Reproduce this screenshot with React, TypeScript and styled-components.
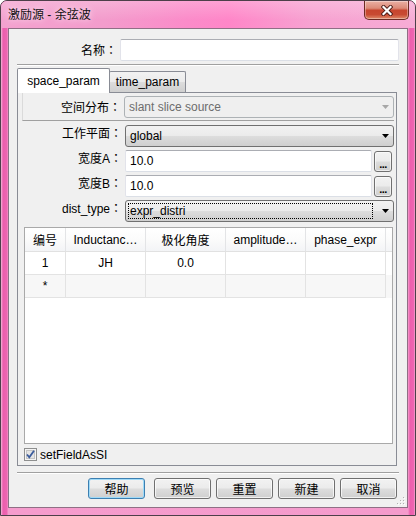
import React from "react";
import styled, { createGlobalStyle } from "styled-components";

const FONT = `"Liberation Sans", "Noto Sans CJK SC", sans-serif`;

const GlobalStyle = createGlobalStyle`
  html, body { margin: 0; padding: 0; background: #ffffff; }
  body { font-family: ${FONT}; font-size: 12px; color: #000; }
  *, *::before, *::after { box-sizing: border-box; }
`;

const Window = styled.div`
  width: 416px;
  height: 516px;
  display: flex;
  flex-direction: column;
  border: 1px solid #4d3f49;
  border-radius: 7px 7px 0 0;
  overflow: hidden;
  background: #ee72b8;
`;

const TitleBar = styled.div`
  flex: 0 0 27px;
  display: flex;
  align-items: flex-start;
  justify-content: space-between;
  padding: 0 6px 0 7px;
  background:
    linear-gradient(to bottom, rgba(255, 255, 255, 0.22), rgba(255, 255, 255, 0) 70%),
    linear-gradient(to right, #f3a2cf 0%, #f39ccc 25%, #fb8bc9 45%, #ff86c8 55%, #f7a2d1 75%, #f6acd5 100%);
`;

const Title = styled.div`
  margin-top: 6px;
  line-height: 16px;
  font-size: 12px;
  color: #111;
  text-shadow: 0 0 6px rgba(255, 255, 255, 0.9);
`;

const CloseButton = styled.div`
  width: 45px;
  height: 19px;
  border: 1px solid #6b2a24;
  border-top: none;
  border-radius: 0 0 5px 5px;
  background: linear-gradient(to bottom, #ebb0a4 0%, #dc8a78 40%, #c7452e 52%, #c84a32 75%, #e08a6a 100%);
  box-shadow: inset 0 0 0 1px rgba(255, 255, 255, 0.35);
  display: flex;
  align-items: center;
  justify-content: center;
`;

const Frame = styled.div`
  flex: 1;
  display: flex;
  padding: 0 7px 7px 7px;
  background: linear-gradient(to right, #f6b6da 0px, #ec5ead 2px, #ee66b2 6px, #f59ccd 7px, #f49bcc calc(100% - 7px), #ec5ead calc(100% - 5px), #ee66b2 calc(100% - 1px), #f6b6da 100%);
`;

const Client = styled.div`
  flex: 1;
  position: relative;
  display: flex;
  flex-direction: column;
  background: #f0f0f0;
  border: 1px solid #8f6f85;
`;

const NameRow = styled.div`
  display: flex;
  align-items: center;
  padding: 10px 8px 0 8px;
`;

const Label = styled.div<{ $w: number }>`
  flex: 0 0 ${(p) => p.$w}px;
  margin-right: 3px;
  text-align: right;
  white-space: nowrap;
  line-height: 16px;
`;

const Colon = styled.span`
  font-family: "Noto Sans CJK JP", "Noto Sans CJK TC", sans-serif;
`;

const TextInput = styled.div`
  flex: 1;
  height: 22px;
  display: flex;
  align-items: center;
  padding-left: 4px;
  background: #fff;
  border: 1px solid #dbdfe6;
  border-top-color: #abadb3;
  border-left-color: #e2e3ea;
  border-right-color: #e2e3ea;
  border-radius: 2px;
`;

const Separator = styled.div`
  margin: 3px 8px 0 8px;
  border-top: 1px solid #a0a0a0;
  border-bottom: 1px solid #ffffff;
`;

const TabWidget = styled.div`
  margin: 2px 10px 0 8px;
  display: flex;
  flex-direction: column;
`;

const TabBar = styled.div`
  display: flex;
  align-items: flex-end;
  height: 24px;
  position: relative;
  z-index: 1;
`;

const Tab = styled.div<{ $active?: boolean }>`
  position: relative;
  z-index: ${(p) => (p.$active ? 2 : 1)};
  display: flex;
  align-items: center;
  justify-content: center;
  width: ${(p) => (p.$active ? 93 : 77)}px;
  height: ${(p) => (p.$active ? 25 : 21)}px;
  margin-left: ${(p) => (p.$active ? 0 : -1)}px;
  margin-bottom: ${(p) => (p.$active ? -1 : 0)}px;
  border: 1px solid #898c95;
  border-bottom: none;
  border-radius: 2px 2px 0 0;
  background: ${(p) =>
    p.$active ? "#ffffff" : "linear-gradient(to bottom, #f2f2f2 0%, #ebebeb 50%, #dddddd 51%, #cfcfcf 100%)"};
  padding-bottom: ${(p) => (p.$active ? 1 : 0)}px;
`;

const Pane = styled.div`
  height: 374px;
  display: flex;
  flex-direction: column;
  border: 1px solid #898c95;
  background: #f0f0f0;
  padding-right: 2px;
`;

const SpaceFrame = styled.div`
  margin-left: 4px;
  display: flex;
  align-items: center;
  padding: 3px 0 2px 0;
  border-left: 1px solid #dadada;
  border-bottom: 1px solid #a0a0a0;
`;

const FieldRow = styled.div<{ $top: number }>`
  display: flex;
  align-items: flex-start;
  margin-top: ${(p) => p.$top}px;
  height: 22px;
`;

const Combo = styled.div<{ $disabled?: boolean }>`
  flex: 1;
  height: 22px;
  display: flex;
  align-items: stretch;
  padding: 2px 0 2px 2px;
  border: 1px solid ${(p) => (p.$disabled ? "#adb2b5" : "#707070")};
  border-radius: 3px;
  color: ${(p) => (p.$disabled ? "#6d6d6d" : "#000")};
  background: ${(p) =>
    p.$disabled
      ? "#efefef"
      : "linear-gradient(to bottom, #f2f2f2 0%, #ebebeb 49%, #dddddd 51%, #cfcfcf 100%)"};
`;

const ComboText = styled.div<{ $focus?: boolean }>`
  flex: 1;
  display: flex;
  align-items: center;
  padding-left: 1px;
  border: 1px dotted ${(p) => (p.$focus ? "#000" : "transparent")};
  white-space: nowrap;
  overflow: hidden;
`;

const ArrowBox = styled.div`
  flex: 0 0 20px;
  display: flex;
  align-items: center;
  justify-content: flex-end;
  padding-right: 4px;
`;

const DotsButton = styled.div`
  flex: 0 0 18px;
  height: 21px;
  margin: 1px 2px 0 2px;
  border: 1px solid #707070;
  border-radius: 3px;
  background: linear-gradient(to bottom, #f2f2f2 0%, #ebebeb 49%, #dddddd 51%, #cfcfcf 100%);
  box-shadow: inset 0 0 0 1px rgba(255, 255, 255, 0.6);
  display: flex;
  align-items: flex-end;
  justify-content: center;
  font-weight: bold;
  font-size: 11px;
  line-height: 14px;
  letter-spacing: -0.5px;
`;

const Table = styled.div`
  margin: 5px 1px 0 6px;
  height: 217px;
  border: 1px solid #a9a9a9;
  background: #ffffff;
  display: flex;
  flex-direction: column;
`;

const HeaderRow = styled.div`
  display: flex;
  height: 24px;
  flex: 0 0 24px;
  border-bottom: 1px solid #e1e1e1;
  background: linear-gradient(to bottom, #ffffff 0%, #fbfbfb 50%, #f3f4f6 100%);
`;

const HeaderCell = styled.div<{ $w: number }>`
  flex: 0 0 ${(p) => p.$w}px;
  display: flex;
  align-items: center;
  justify-content: center;
  border-right: 1px solid #e3e4e6;
  white-space: nowrap;
  overflow: hidden;
`;

const BodyRow = styled.div<{ $alt?: boolean }>`
  display: flex;
  height: 23px;
  flex: 0 0 23px;
  background: ${(p) => (p.$alt ? "#f7f7f7" : "#ffffff")};
`;

const Cell = styled.div<{ $w: number }>`
  flex: 0 0 ${(p) => p.$w}px;
  display: flex;
  align-items: center;
  justify-content: center;
  border-right: 1px solid #e3e3e3;
  border-bottom: 1px solid #e3e3e3;
`;

const CheckRow = styled.div`
  display: flex;
  align-items: center;
  margin: 4px 0 0 6px;
  height: 13px;
`;

const CheckText = styled.span`
  margin-left: 3px;
  line-height: 14px;
`;

const BottomSeparator = styled.div`
  margin: 6px 8px 0 8px;
  border-top: 1px solid #a0a0a0;
  border-bottom: 1px solid #ffffff;
`;

const ButtonRow = styled.div`
  display: flex;
  justify-content: flex-end;
  padding: 4px 10px 0 0;
`;

const PushButton = styled.div<{ $default?: boolean; $ml: number }>`
  width: 57px;
  height: 21px;
  margin-left: ${(p) => p.$ml}px;
  display: flex;
  align-items: center;
  justify-content: center;
  border: 1px solid ${(p) => (p.$default ? "#3c7fb1" : "#707070")};
  border-radius: 3px;
  background: linear-gradient(to bottom, #f2f2f2 0%, #ebebeb 49%, #dddddd 51%, #cfcfcf 100%);
  box-shadow: inset 0 0 0 1px ${(p) => (p.$default ? "#9fdaf8" : "rgba(255, 255, 255, 0.7)")};
`;

const Grip = styled.div`
  position: absolute;
  right: 1px;
  bottom: 1px;
  width: 11px;
  height: 11px;
`;

const Arrow = ({ color }: { color: string }) => (
  <svg width="7" height="4" viewBox="0 0 7 4">
    <polygon points="0,0 7,0 3.5,4" fill={color} />
  </svg>
);

const CloseX = () => (
  <svg width="12" height="11" viewBox="0 0 12 11">
    <path d="M2.5 2 L9.5 9 M9.5 2 L2.5 9" stroke="#4a1c17" strokeWidth="4" strokeLinecap="square" fill="none" />
    <path d="M2.5 2 L9.5 9 M9.5 2 L2.5 9" stroke="#ffffff" strokeWidth="2.2" strokeLinecap="square" fill="none" />
  </svg>
);

const CheckBox = () => (
  <svg width="13" height="13" viewBox="0 0 13 13">
    <rect x="0.5" y="0.5" width="12" height="12" fill="#f4f4f4" stroke="#8e8f8f" />
    <rect x="2.5" y="2.5" width="8" height="8" fill="#e4e4e4" stroke="#c4c4c4" />
    <path d="M3 6.5 L5.3 9.3 L10 2.8" stroke="#3a5b9c" strokeWidth="1.8" fill="none" />
  </svg>
);

const GripDots = () => (
  <svg width="11" height="11" viewBox="0 0 11 11">
    {[
      [8, 2],
      [8, 5],
      [5, 5],
      [8, 8],
      [5, 8],
      [2, 8],
    ].map(([x, y]) => (
      <g key={`${x}-${y}`}>
        <rect x={x + 1} y={y + 1} width="1" height="1" fill="#ffffff" />
        <rect x={x} y={y} width="1" height="1" fill="#b0b0b0" />
      </g>
    ))}
  </svg>
);

const COLS = [41, 80, 80, 80, 80];
const HEADERS = ["编号", "Inductanc…", "极化角度", "amplitude…", "phase_expr"];
const ROWS = [
  { alt: false, cells: ["1", "JH", "0.0", "", ""] },
  { alt: true, cells: ["*", "", "", "", ""] },
];

const BUTTONS = [
  { text: "帮助", def: true, ml: 0 },
  { text: "预览", def: false, ml: 9 },
  { text: "重置", def: false, ml: 5 },
  { text: "新建", def: false, ml: 5 },
  { text: "取消", def: false, ml: 5 },
];

const FieldLabel = ({ w, text }: { w: number; text: string }) => (
  <Label $w={w}>
    {text}
    <Colon>：</Colon>
  </Label>
);

export default function App() {
  return (
    <>
      <GlobalStyle />
      <Window>
        <TitleBar>
          <Title>激励源 - 余弦波</Title>
          <CloseButton>
            <CloseX />
          </CloseButton>
        </TitleBar>
        <Frame>
          <Client>
            <NameRow>
              <FieldLabel w={100} text="名称" />
              <TextInput />
            </NameRow>
            <Separator />
            <TabWidget>
              <TabBar>
                <Tab $active>space_param</Tab>
                <Tab>time_param</Tab>
              </TabBar>
              <Pane>
                <SpaceFrame>
                  <FieldLabel w={98} text="空间分布" />
                  <Combo $disabled>
                    <ComboText>slant slice source</ComboText>
                    <ArrowBox>
                      <Arrow color="#a7a7a7" />
                    </ArrowBox>
                  </Combo>
                </SpaceFrame>
                <FieldRow $top={4}>
                  <FieldLabel w={104} text="工作平面" />
                  <Combo>
                    <ComboText>global</ComboText>
                    <ArrowBox>
                      <Arrow color="#000" />
                    </ArrowBox>
                  </Combo>
                </FieldRow>
                <FieldRow $top={3}>
                  <FieldLabel w={104} text="宽度A" />
                  <TextInput>10.0</TextInput>
                  <DotsButton>...</DotsButton>
                </FieldRow>
                <FieldRow $top={3}>
                  <FieldLabel w={104} text="宽度B" />
                  <TextInput>10.0</TextInput>
                  <DotsButton>...</DotsButton>
                </FieldRow>
                <FieldRow $top={3}>
                  <FieldLabel w={104} text="dist_type" />
                  <Combo>
                    <ComboText $focus>expr_distri</ComboText>
                    <ArrowBox>
                      <Arrow color="#000" />
                    </ArrowBox>
                  </Combo>
                </FieldRow>
                <Table>
                  <HeaderRow>
                    {HEADERS.map((h, i) => (
                      <HeaderCell key={h} $w={COLS[i]}>
                        {h}
                      </HeaderCell>
                    ))}
                  </HeaderRow>
                  {ROWS.map((r, ri) => (
                    <BodyRow key={ri} $alt={r.alt}>
                      {r.cells.map((c, ci) => (
                        <Cell key={ci} $w={COLS[ci]}>
                          {c}
                        </Cell>
                      ))}
                    </BodyRow>
                  ))}
                </Table>
                <CheckRow>
                  <CheckBox />
                  <CheckText>setFieldAsSI</CheckText>
                </CheckRow>
              </Pane>
            </TabWidget>
            <BottomSeparator />
            <ButtonRow>
              {BUTTONS.map((b) => (
                <PushButton key={b.text} $default={b.def} $ml={b.ml}>
                  {b.text}
                </PushButton>
              ))}
            </ButtonRow>
            <Grip>
              <GripDots />
            </Grip>
          </Client>
        </Frame>
      </Window>
    </>
  );
}
